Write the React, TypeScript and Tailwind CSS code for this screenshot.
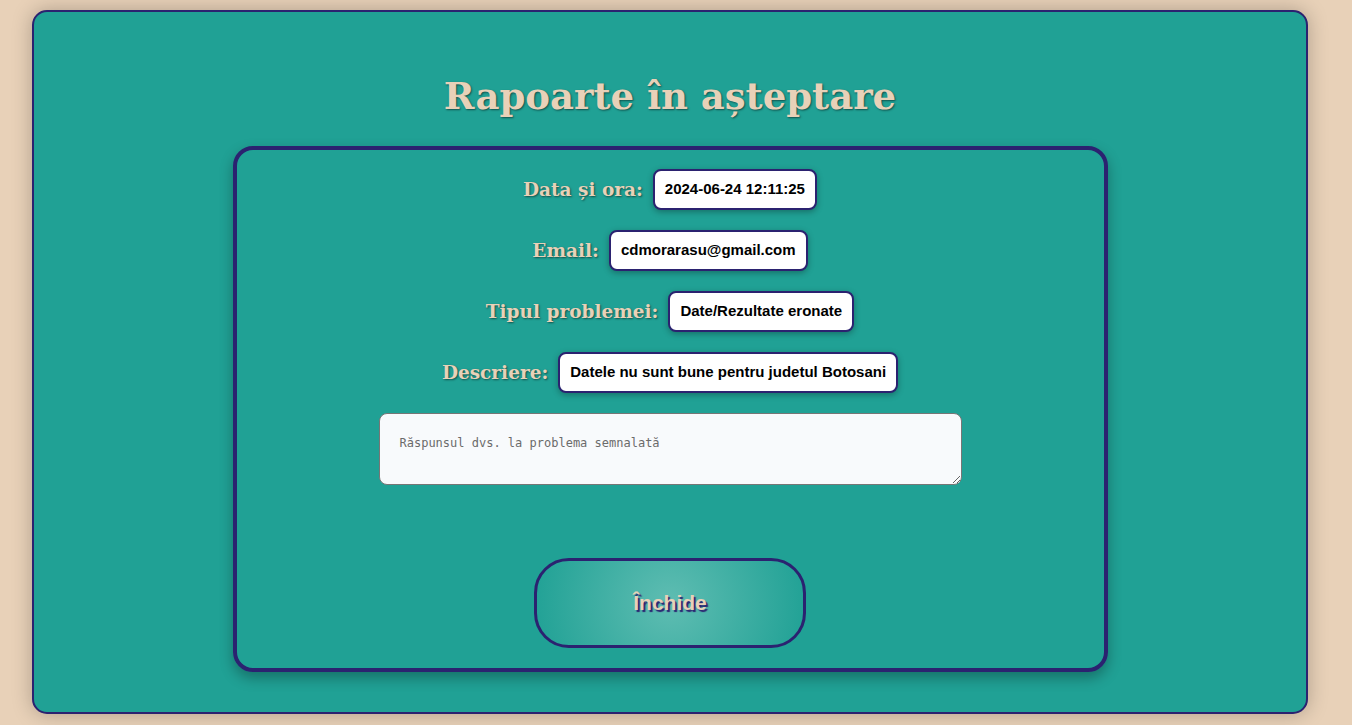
const ROWS: { label: string; value: string }[] = [
  { label: 'Data și ora:', value: '2024-06-24 12:11:25' },
  { label: 'Email:', value: 'cdmorarasu@gmail.com' },
  { label: 'Tipul problemei:', value: 'Date/Rezultate eronate' },
  { label: 'Descriere:', value: 'Datele nu sunt bune pentru judetul Botosani' },
];

export default function App() {
  return (
    <div className="min-h-screen bg-[#e8d1b8] pt-[10px] pb-[11px]">
      <div className="ml-8 w-[1276px] h-[704px] rounded-[15px] border-2 border-[#2b2270] bg-[#20a195] shadow-[0_0_20px_rgba(0,0,0,0.25)] flex flex-col items-center">
        {/* ── Title ─── */}
        <h1 className="mt-[60px] text-[37px] leading-[48px] font-bold text-[#e8d1b8] [font-family:'DejaVu_Serif',serif] [text-shadow:1px_1px_2px_rgba(0,0,0,0.5)]">
          Rapoarte în așteptare
        </h1>

        {/* ── Report card ─── */}
        <div className="mt-[26px] w-[875px] h-[526px] rounded-[20px] border-4 border-[#2b2270] shadow-[0_6px_14px_rgba(0,0,0,0.3)] flex flex-col items-center pt-[19px]">
          <div className="flex flex-col items-center gap-5">
            {ROWS.map((r) => (
              <div key={r.label} className="flex items-center gap-[10px]">
                <span className="text-[18.5px] font-bold text-[#e8d1b8] [font-family:'DejaVu_Serif',serif] [text-shadow:1px_1px_2px_rgba(0,0,0,0.5)]">
                  {r.label}
                </span>
                <span className="h-[41px] flex items-center px-[10px] rounded-[8px] border-2 border-[#2b2270] bg-white text-[15px] font-bold text-black [font-family:'Liberation_Sans',sans-serif] shadow-[0_2px_6px_rgba(0,0,0,0.3)]">
                  {r.value}
                </span>
              </div>
            ))}
          </div>

          <textarea
            placeholder="Răspunsul dvs. la problema semnalată"
            className="mt-5 w-[583px] h-[72px] rounded-[8px] border border-[#767676] bg-[#f8fafc] px-[20px] py-[20px] text-[12px] text-black placeholder:text-[#6b6b6b] [font-family:'DejaVu_Sans_Mono',monospace] outline-none"
          />

          <button className="mt-[73px] w-[272px] h-[90px] rounded-[35px] border-[3px] border-[#2b2270] bg-[radial-gradient(circle,#5fbdb2_0%,#20a195_100%)] text-[21px] font-bold text-[#e8d1b8] [font-family:'Liberation_Sans',sans-serif] [text-shadow:2px_2px_1px_#2b2270]">
            Închide
          </button>
        </div>
      </div>
    </div>
  );
}
